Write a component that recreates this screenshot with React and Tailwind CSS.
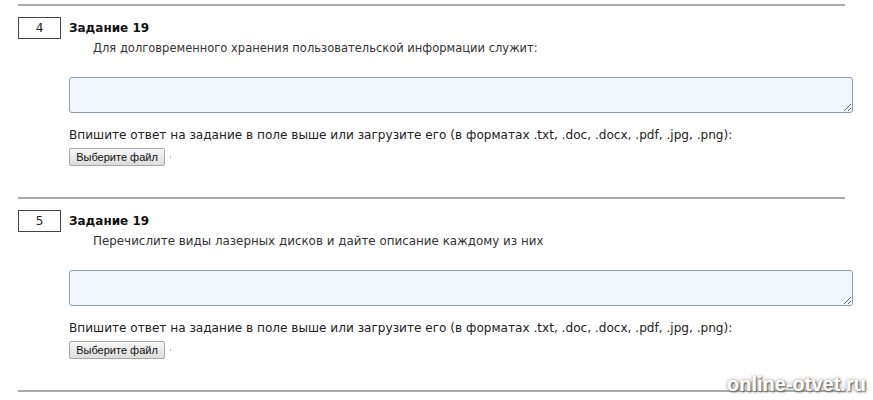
import React from "react";

const font = { fontFamily: '"DejaVu Sans", Verdana, sans-serif' };

function Block({ num, question, qClass }) {
  return (
    <div className="pb-[31px]">
      <div className="ml-[18px] h-[2px] w-[827px] bg-[#a9a9a9]" />
      <div className="mt-[11px] flex items-center">
        <div className="ml-[18px] flex h-[22px] w-[43px] items-center justify-center border border-[#444] text-[12px] text-[#222]">
          {num}
        </div>
        <div className="ml-[8px] text-[12px] font-bold text-[#111]">Задание 19</div>
      </div>
      <div className={"ml-[93px] mt-[1px] h-[16px] leading-[16px] text-[#333] " + qClass}>{question}</div>
      <textarea className="ml-[69px] mt-[21px] block h-[36px] w-[784px] rounded-[3px] border border-[#8b9bb0] bg-[#f2f6fd] outline-none" />
      <div className="ml-[69px] mt-[14px] h-[16px] text-[12.1px] leading-[16px] text-[#222]">
        Впишите ответ на задание в поле выше или загрузите его (в форматах .txt, .doc, .docx, .pdf, .jpg, .png):
      </div>
      <div className="ml-[69px] mt-[5px] flex items-center">
        <div
          className="flex h-[18px] w-[96px] items-center justify-center rounded-[2px] border border-[#a8a8a8] bg-gradient-to-b from-[#f7f7f7] to-[#dcdcdc] text-[11px] text-[#111]"
          style={{ fontFamily: '"Liberation Sans", Arial, sans-serif' }}
        >
          Выберите файл
        </div>
        <div className="ml-[5px] h-[2px] w-[1px] bg-[#bbb]" />
      </div>
    </div>
  );
}

export default function App() {
  return (
    <div className="relative h-[400px] w-[873px] overflow-hidden bg-white pt-[4px]" style={font}>
      <Block num="4" qClass="text-[11.5px]" question="Для долговременного хранения пользовательской информации служит:" />
      <Block num="5" qClass="text-[11.9px]" question="Перечислите виды лазерных дисков и дайте описание каждому из них" />
      <div className="ml-[18px] h-[2px] w-[827px] bg-[#a9a9a9]" />
      <div
        className="absolute left-[727px] top-[372px] text-[20px] font-bold leading-[24px] text-white [text-shadow:1px_1px_2px_#555,0_0_4px_#999]"
        style={{ fontFamily: '"Liberation Sans", Arial, sans-serif' }}
      >
        online-otvet.ru
      </div>
    </div>
  );
}
